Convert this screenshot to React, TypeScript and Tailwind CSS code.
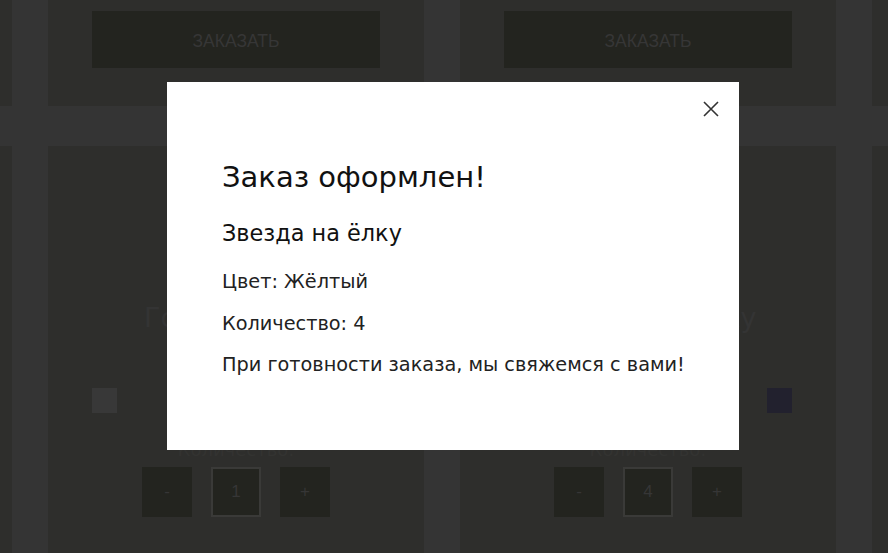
const cards = [
  { title: 'Шар на ёлку', swatches: ['#383838', '#3a2f2f', '#2f3a30', '#2a2a3a'], qty: 1 },
  { title: 'Голубой шар', swatches: ['#383838', '#3a2f2f', '#2f3a30', '#2a2a3a'], qty: 1 },
  { title: 'Звезда на ёлку', swatches: ['#3a3a2a', '#3a2f2f', '#383838', '#22212e'], qty: 4 },
  { title: 'Гирлянда', swatches: ['#383838', '#3a2f2f', '#2f3a30', '#2a2a3a'], qty: 1 },
]

const gotham = { fontFamily: '"DejaVu Sans", "Noto Sans", sans-serif' }

function TopCard() {
  return (
    <div className="h-[106px] w-[376px] shrink-0 bg-[#2e2e2c] px-[44px] pt-[11px]">
      <div className="flex h-[57px] w-full items-center justify-center pt-[3px] font-['Liberation_Sans',sans-serif] text-[17.5px] text-[#363636] bg-[#23241f]">
        ЗАКАЗАТЬ
      </div>
    </div>
  )
}

function ProductCard({ title, swatches, qty }: { title: string; swatches: string[]; qty: number }) {
  return (
    <div className="flex h-[420px] w-[376px] shrink-0 flex-col items-center bg-[#2e2e2c] px-[44px] pt-[158px]" style={gotham}>
      <div className="text-[27px] leading-none whitespace-nowrap text-[#343434]">{title}</div>
      <div className="mt-[57px] flex w-full justify-between">
        {swatches.map((c, i) => (
          <div key={i} className="h-[25px] w-[25px]" style={{ background: c }} />
        ))}
      </div>
      <div className="mt-[28px] text-[18px] leading-none text-[#333331]">Количество:</div>
      <div className="mt-[8px] flex gap-[19px] font-['Liberation_Sans',sans-serif] text-[17px] text-[#363636]">
        <div className="flex h-[50px] w-[50px] items-center justify-center bg-[#23241f]">-</div>
        <div className="flex h-[50px] w-[50px] items-center justify-center border-2 border-[#3a3a38] bg-[#23241f]">{qty}</div>
        <div className="flex h-[50px] w-[50px] items-center justify-center bg-[#23241f]">+</div>
      </div>
    </div>
  )
}

export default function App() {
  return (
    <div className="relative h-[553px] w-[888px] overflow-hidden bg-[#343434]">
      <div className="-ml-[364px] flex w-max flex-col gap-[40px]">
        <div className="flex gap-[36px]">
          {cards.map((c) => (
            <TopCard key={c.title} />
          ))}
        </div>
        <div className="flex gap-[36px]">
          {cards.map((c) => (
            <ProductCard key={c.title} {...c} />
          ))}
        </div>
      </div>

      {/* modal */}
      <div className="absolute top-[82px] left-[167px] h-[368px] w-[572px] bg-white pt-[81px] pl-[55px]" style={gotham}>
        <button className="absolute top-[19px] right-[20px] h-4 w-4">
          <svg viewBox="0 0 16 16" className="h-4 w-4" fill="none" stroke="#333" strokeWidth="1.6">
            <path d="M1 1L15 15M15 1L1 15" />
          </svg>
        </button>
        <h2 className="text-[29px] leading-none text-[#111]">Заказ оформлен!</h2>
        <h3 className="mt-[30px] text-[22.4px] leading-none text-[#111]">Звезда на ёлку</h3>
        <p className="mt-[28px] text-[19.3px] leading-none text-[#222]">Цвет: Жёлтый</p>
        <p className="mt-[22px] text-[19.3px] leading-none text-[#222]">Количество: 4</p>
        <p className="mt-[22px] text-[19.3px] leading-none text-[#222]">При готовности заказа, мы свяжемся с вами!</p>
      </div>
    </div>
  )
}
